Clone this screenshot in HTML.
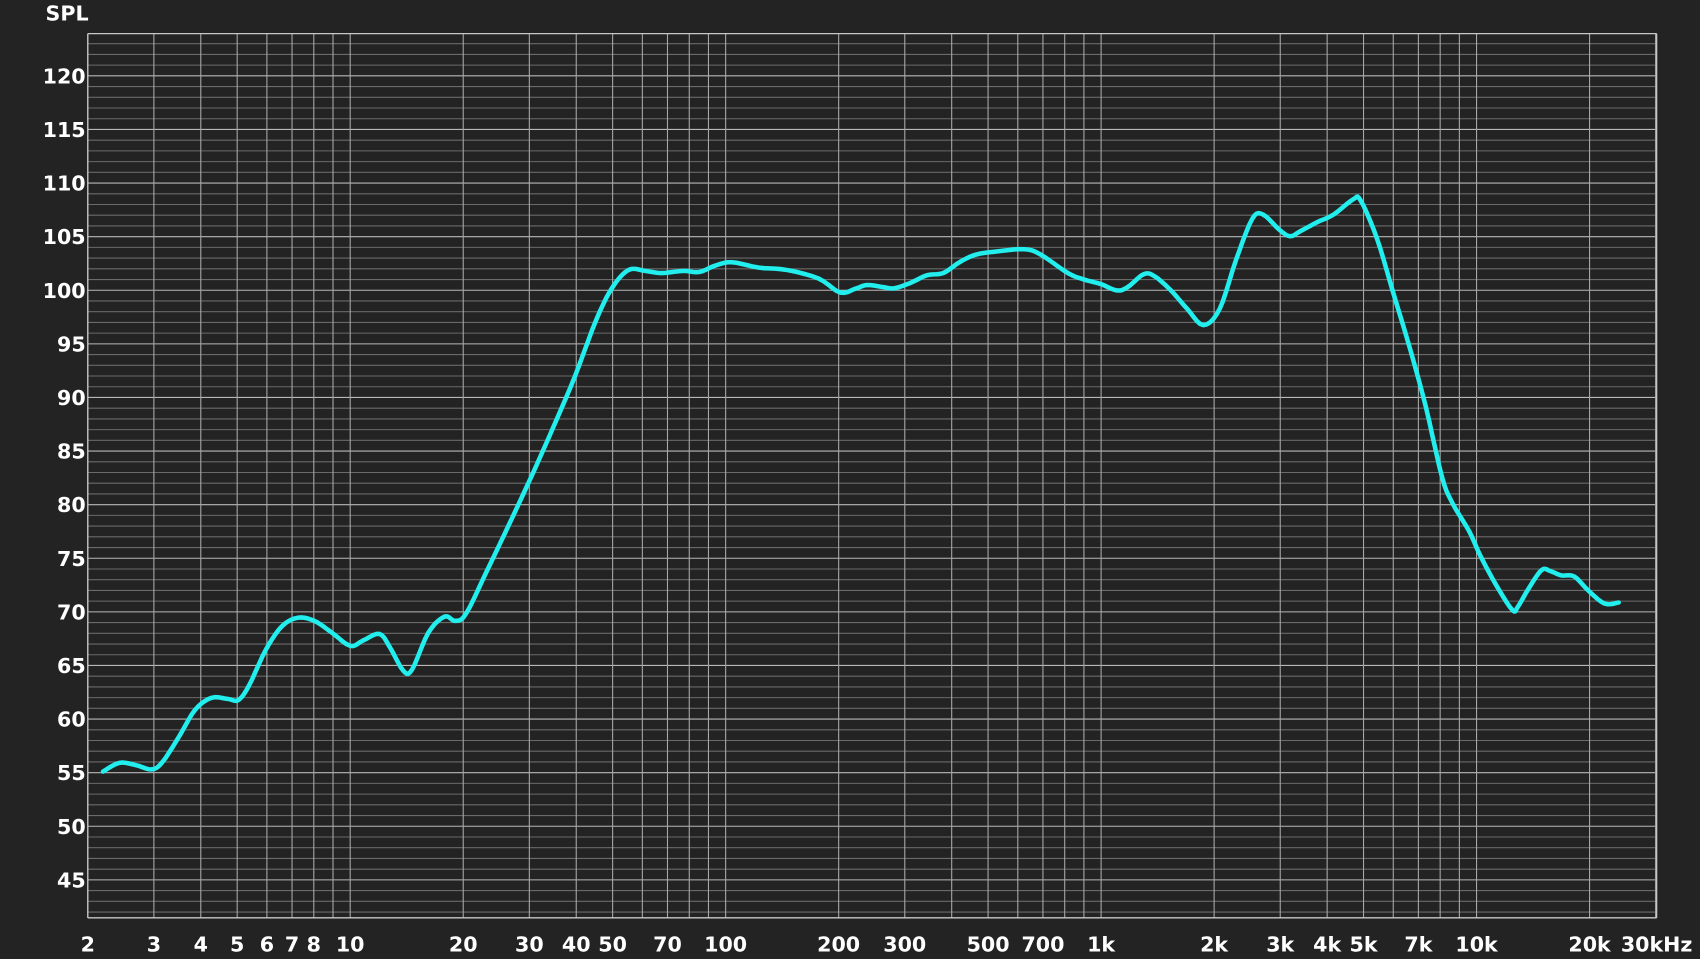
<!DOCTYPE html>
<html><head><meta charset="utf-8"><style>
html,body{margin:0;padding:0;background:#232323;width:1700px;height:959px;overflow:hidden}
svg{display:block}
text{font-family:"DejaVu Sans","Liberation Sans",sans-serif;font-weight:bold;fill:#fff;font-size:19px}
</style></head><body>
<svg id="s" width="1700" height="959" viewBox="0 0 1568 885" preserveAspectRatio="none" xmlns="http://www.w3.org/2000/svg">
<rect width="1568" height="885" fill="#232323"/>
<g id="grid"></g>
<polyline id="curve" fill="none" stroke="#22eeee" stroke-width="4.2" stroke-linejoin="round" stroke-linecap="round" points=""/>
<text x="42" y="19" font-size="20">SPL</text>
</svg>
<script>
var NS="http://www.w3.org/2000/svg",g=document.getElementById('grid'),s=document.getElementById('s');
var L=81,T=31,R=1528,B=847,dec=346.3;
function fx(f){return 323+Math.log10(f/10)*dec;}
function fy(d){return 70+(120-d)*9.893;}
function line(x1,y1,x2,y2,c,w){var l=document.createElementNS(NS,'line');l.setAttribute('x1',x1);l.setAttribute('y1',y1);l.setAttribute('x2',x2);l.setAttribute('y2',y2);l.setAttribute('stroke',c);l.setAttribute('stroke-width',w||1);g.appendChild(l);}
function txt(x,y,t,a){var e=document.createElementNS(NS,'text');e.setAttribute('x',x);e.setAttribute('y',y);if(a)e.setAttribute('text-anchor',a);e.textContent=t;s.appendChild(e);}
for(var d=42;d<=123;d++){var y=fy(d);if(y<T||y>B)continue;line(L,y,R,y,d%5==0?'#b8b8b8':'#6a6a6a',1);}
var fs=[];[1,10,100,1000,10000].forEach(function(m){for(var k=1;k<10;k++){var f=k*m;if(f>=2&&f<=30000)fs.push(f);}});fs.push(30000);
fs.forEach(function(f){line(fx(f),T,fx(f),B,'#a8a8a8',1);});
line(L,T,R,T,'#c8c8c8',1.2);line(L,B,R,B,'#c8c8c8',1.2);line(L,T,L,B,'#c8c8c8',1.2);line(R,T,R,B,'#c8c8c8',1.2);
for(var d=45;d<=120;d+=5)txt(79,fy(d)+7,String(d),'end');
[[2,'2'],[3,'3'],[4,'4'],[5,'5'],[6,'6'],[7,'7'],[8,'8'],[10,'10'],[20,'20'],[30,'30'],[40,'40'],[50,'50'],[70,'70'],[100,'100'],[200,'200'],[300,'300'],[500,'500'],[700,'700'],[1000,'1k'],[2000,'2k'],[3000,'3k'],[4000,'4k'],[5000,'5k'],[7000,'7k'],[10000,'10k'],[20000,'20k']].forEach(function(p){txt(fx(p[0]),878,p[1],'middle');});
txt(1528,878,'30kHz','middle');
var pts=[[95,712],[110,704],[125,706],[140,710],[150,703],[165,680],[180,655],[195,644],[210,645],[220,646],[230,632],[245,600],[260,578],[275,570],[290,573],[305,583],[323,596],[335,591],[350,585],[360,598],[372,619],[380,618],[395,584],[410,569],[420,573],[430,566],[450,525],[470,483],[490,440],[510,395],[530,348],[550,295],[565,265],[580,249],[595,250],[610,252],[630,250],[645,251],[660,245],[675,242],[700,247],[725,249],[755,257],[775,270],[790,266],[800,263],[815,265],[825,266],[840,261],[855,254],[870,252],[885,242],[900,235],[920,232],[945,230],[960,235],[985,252],[1000,258],[1015,262],[1030,268],[1040,265],[1055,253],[1065,255],[1080,268],[1095,285],[1110,300],[1125,285],[1140,240],[1155,202],[1165,198],[1180,212],[1190,218],[1200,213],[1215,205],[1230,198],[1248,184],[1255,185],[1270,220],[1285,270],[1300,320],[1315,375],[1330,440],[1340,465],[1355,490],[1365,512],[1380,540],[1395,563],[1400,560],[1410,543],[1422,526],[1430,527],[1440,531],[1452,532],[1465,545],[1480,557],[1493,556]];
// catmull-rom smoothing
var out=[];for(var i=0;i<pts.length-1;i++){var p0=pts[Math.max(i-1,0)],p1=pts[i],p2=pts[i+1],p3=pts[Math.min(i+2,pts.length-1)];for(var t=0;t<1;t+=0.2){var t2=t*t,t3=t2*t;var x=0.5*((2*p1[0])+(-p0[0]+p2[0])*t+(2*p0[0]-5*p1[0]+4*p2[0]-p3[0])*t2+(-p0[0]+3*p1[0]-3*p2[0]+p3[0])*t3);var y=0.5*((2*p1[1])+(-p0[1]+p2[1])*t+(2*p0[1]-5*p1[1]+4*p2[1]-p3[1])*t2+(-p0[1]+3*p1[1]-3*p2[1]+p3[1])*t3);out.push(x.toFixed(1)+','+y.toFixed(1));}}
out.push(pts[pts.length-1].join(','));
var c=document.getElementById('curve');c.setAttribute('points',out.join(' '));s.appendChild(c);
</script>
</body></html>
